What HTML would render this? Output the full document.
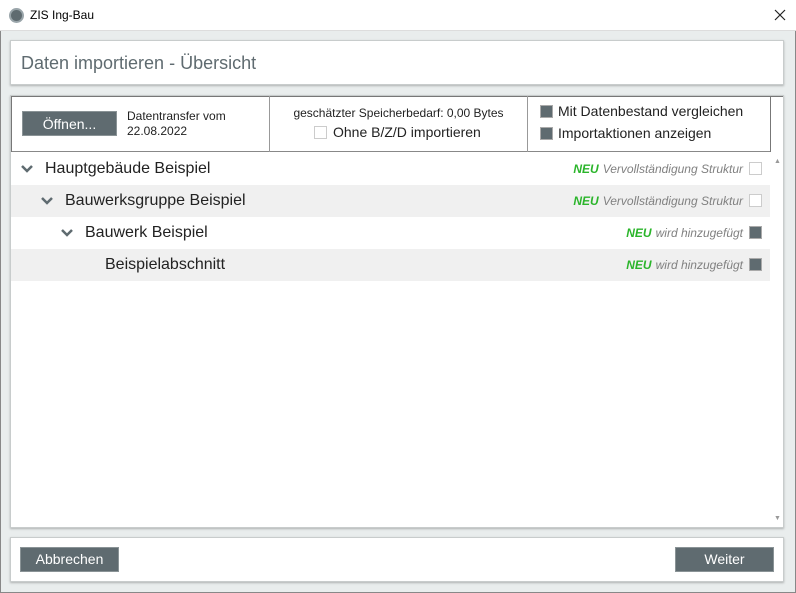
<!DOCTYPE html><html><head><meta charset="utf-8"><style>
*{margin:0;padding:0;box-sizing:border-box}
body{width:796px;height:593px;font-family:"Liberation Sans",sans-serif;background:#e9eded;position:relative;overflow:hidden;color:#333}
.a{position:absolute}
.title{left:0;top:0;width:796px;height:31px;background:#fff;border-bottom:1px solid #ddd}
.panel{background:#fff;border:1px solid #c8cccc;box-shadow:0 1px 2px rgba(0,0,0,.25)}
.btn{background:#5f6b70;color:#fff;border:1px solid #8a9396;text-align:center;font-size:14px;line-height:22px}
.cb{width:13px;height:13px;border:1px solid #ccc;background:#fff}
.cbf{width:13px;height:13px;border:1px solid #aaa;background:#5f6b70}
.row{left:11px;width:759px;height:32px;font-size:16px;line-height:32px;color:#222}
.g{background:#f0f0f0}
.st{position:absolute;right:27px;top:0;font-size:12px;font-style:italic;color:#808080}
.st b{color:#2bb52b;font-weight:bold;margin-right:4px}
.row .c{position:absolute;right:8px;top:9px}
.chev{position:absolute;top:12px}
</style></head><body>
<div class="a title"></div>
<div class="a" style="left:9px;top:8px;width:15px;height:15px;border-radius:50%;background:#5f6b70;border:2px solid #9aa5aa"></div>
<div class="a" style="left:30px;top:8px;font-size:12px;color:#000">ZIS Ing-Bau</div>
<svg class="a" style="left:774px;top:9px" width="12" height="12"><path d="M1 1L11 11M11 1L1 11" stroke="#222" stroke-width="1.2"/></svg>
<div class="a" style="left:0;top:31px;width:1px;height:562px;background:#888"></div>
<div class="a" style="right:0;top:31px;width:1px;height:562px;background:#888"></div>
<div class="a" style="left:0;bottom:0;width:796px;height:1px;background:#888"></div>

<div class="a panel" style="left:10px;top:40px;width:774px;height:45px"></div>
<div class="a" style="left:21px;top:53px;font-size:18px;color:#5f6b70">Daten importieren - Übersicht</div>

<div class="a panel" style="left:10px;top:95px;width:774px;height:433px"></div>
<div class="a" style="left:11px;top:151px;width:759px;height:1px;background:#888"></div>
<div class="a" style="left:11px;top:96px;width:772px;height:1px;background:#777"></div>
<div class="a" style="left:11px;top:96px;width:1px;height:56px;background:#777"></div>
<div class="a" style="left:269px;top:96px;width:1px;height:56px;background:#999"></div>
<div class="a" style="left:527px;top:96px;width:1px;height:56px;background:#999"></div>
<div class="a" style="left:770px;top:96px;width:1px;height:56px;background:#777"></div>
<div class="a btn" style="left:22px;top:111px;width:95px;height:25px;line-height:24px;font-size:14px">Öffnen...</div>
<div class="a" style="left:127px;top:109px;font-size:12px;line-height:15px;color:#222">Datentransfer vom<br>22.08.2022</div>
<div class="a" style="left:270px;top:106px;width:257px;text-align:center;font-size:12px;color:#222">geschätzter Speicherbedarf: 0,00 Bytes</div>
<div class="a cb" style="left:314px;top:126px"></div>
<div class="a" style="left:333px;top:124px;font-size:14px;color:#222">Ohne B/Z/D importieren</div>
<div class="a cbf" style="left:540px;top:105px"></div>
<div class="a" style="left:558px;top:103px;font-size:14px;color:#222">Mit Datenbestand vergleichen</div>
<div class="a cbf" style="left:540px;top:127px"></div>
<div class="a" style="left:558px;top:125px;font-size:14px;color:#222">Importaktionen anzeigen</div>

<div class="a row" style="top:153px"><svg class="chev" style="left:10px" width="12" height="8"><path d="M1 1L6 6L11 1" fill="none" stroke="#5f6b70" stroke-width="2.5"/></svg><span style="position:absolute;left:34px">Hauptgebäude Beispiel</span><span class="st"><b>NEU</b>Vervollständigung Struktur</span><div class="a cb c"></div></div>
<div class="a row g" style="top:185px"><svg class="chev" style="left:30px" width="12" height="8"><path d="M1 1L6 6L11 1" fill="none" stroke="#5f6b70" stroke-width="2.5"/></svg><span style="position:absolute;left:54px">Bauwerksgruppe Beispiel</span><span class="st"><b>NEU</b>Vervollständigung Struktur</span><div class="a cb c"></div></div>
<div class="a row" style="top:217px"><svg class="chev" style="left:50px" width="12" height="8"><path d="M1 1L6 6L11 1" fill="none" stroke="#5f6b70" stroke-width="2.5"/></svg><span style="position:absolute;left:74px">Bauwerk Beispiel</span><span class="st"><b>NEU</b>wird hinzugefügt</span><div class="a cbf c"></div></div>
<div class="a row g" style="top:249px"><span style="position:absolute;left:94px">Beispielabschnitt</span><span class="st"><b>NEU</b>wird hinzugefügt</span><div class="a cbf c"></div></div>
<div class="a" style="left:774px;top:158px;font-size:7px;color:#999">▲</div>
<div class="a" style="left:774px;top:515px;font-size:7px;color:#999">▼</div>

<div class="a panel" style="left:10px;top:537px;width:774px;height:45px"></div>
<div class="a btn" style="left:20px;top:547px;width:99px;height:25px">Abbrechen</div>
<div class="a btn" style="left:675px;top:547px;width:99px;height:25px">Weiter</div>
</body></html>
